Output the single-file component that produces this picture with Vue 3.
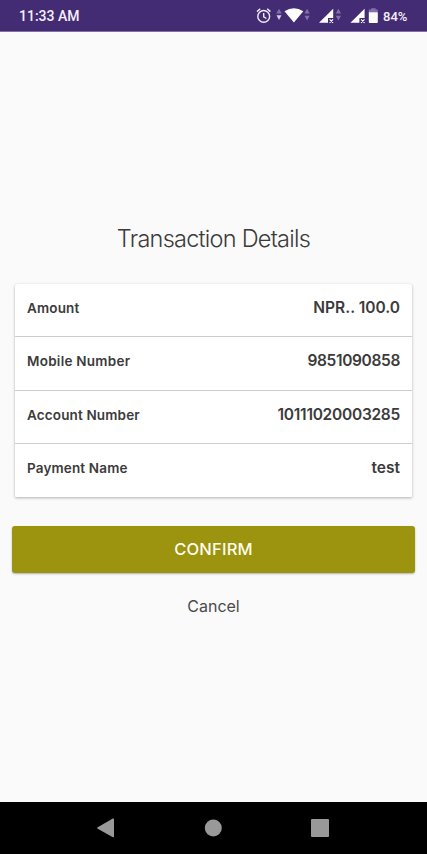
<script setup>
const rows = [
  { id: 'amount', label: 'Amount', value: 'NPR.. 100.0' },
  { id: 'mobile', label: 'Mobile Number', value: '9851090858' },
  { id: 'account', label: 'Account Number', value: '10111020003285' },
  { id: 'payment', label: 'Payment Name', value: 'test' },
]
</script>

<template>
  <div class="screen">
    <header class="status">
      <span class="time">11:33 AM</span>
      <svg class="icons" width="124" height="31" viewBox="256 0 124 31">
        <g fill="none" stroke="#f1ecf8" stroke-width="1.4">
          <circle cx="263.7" cy="16.4" r="5.9" />
          <path d="M263.7 13v3.8l2.7 1.7M257 11.6l3.2-2.8M270.4 11.6l-3.2-2.8" />
        </g>
        <g fill="#8272ab">
          <path d="M276.3 13.4l2.7-4.6 2.7 4.6zM304.5 13.4l2.6-4.6 2.6 4.6zM304.5 15.8h5.2l-2.6 4.6zM335.8 13.4l2.6-4.6 2.6 4.6zM335.8 15.8h5.2l-2.6 4.6z" />
          <path d="M371.2 8.2h4.4v1.3h2.2v3h-9v-3h2.4z" />
        </g>
        <g fill="#fff">
          <path d="M276.5 15.3h5l-2.5 4.8z" fill="#d9d1e6" />
          <path d="M284.5 11.3Q294 5 303.3 11.3L293.9 22.6z" />
          <path d="M319 22.8L333.2 8.8V17.9H328V22.8z" />
          <path d="M350.4 22.8L364.6 8.8V17.9H359.4V22.8z" />
          <path d="M368.8 12.2h9v9.7q0 1-1 1h-7q-1 0-1-1z" />
        </g>
        <path d="M329.6 19.4l3.5 3.5m0-3.5l-3.5 3.5M361 19.4l3.5 3.5m0-3.5l-3.5 3.5" stroke="#fff" stroke-width="1.1" />
      </svg>
      <span class="percent">84%</span>
    </header>

    <main class="content">
      <h1 class="title">Transaction Details</h1>
      <section class="card">
        <div v-for="row in rows" :key="row.id" class="row">
          <span class="label" :class="row.id">{{ row.label }}</span>
          <span class="value" :class="row.id">{{ row.value }}</span>
        </div>
      </section>
      <button class="confirm">CONFIRM</button>
      <button class="cancel">Cancel</button>
    </main>

    <nav class="navbar">
      <svg width="18" height="20" viewBox="0 0 18 20"><path d="M.7 9.3L15.9.6q1.1-.5 1.1.6v17.5q0 1-1.1.5L.7 10.7q-1-.7 0-1.4z" fill="#999" /></svg>
      <svg width="18" height="18" viewBox="0 0 18 18"><circle cx="9.3" cy="9" r="8.5" fill="#999" /></svg>
      <svg width="18" height="18" viewBox="0 0 18 18"><rect width="18" height="18" rx="1" fill="#999" /></svg>
    </nav>
  </div>
</template>

<style>
body {
  background: #fafafa;
}
</style>

<style scoped>
.screen {
  display: flex;
  flex-direction: column;
  width: 427px;
  height: 854px;
  overflow: hidden;
  background: #fafafa;
  color: #3b3b3b;
  font-family: Inter, sans-serif;
}
.status {
  display: flex;
  align-items: center;
  box-sizing: border-box;
  height: 32px;
  flex: none;
  padding: 0 19px;
  background: #442c74;
  border-bottom: 1px solid #8170a3;
  color: #f4effa;
  font-family: Roboto, sans-serif;
  font-weight: 500;
}
.time {
  font-size: 14px;
  line-height: 16px;
  padding-top: 1px;
}
.icons {
  margin-left: auto;
}
.percent {
  width: 28px;
  padding: 1px 0 0 3px;
  box-sizing: border-box;
  font-size: 13px;
  line-height: 15px;
}
.content {
  display: flex;
  flex-direction: column;
  flex: 1;
  padding: 191px 12px 0;
}
.title {
  margin: 0 0 29px;
  text-align: center;
  font-size: 23.5px;
  line-height: 32px;
  font-weight: 300;
  letter-spacing: -0.75px;
}
.card {
  margin: 0 3px;
  background: #fff;
  border-radius: 3px 3px 1px 1px;
  box-shadow: 0 1px 3px rgba(0, 0, 0, 0.3);
}
.row {
  display: flex;
  justify-content: space-between;
  box-sizing: border-box;
  height: 53.4px;
  padding: 14px 12px 0;
  border-bottom: 1.4px solid #cdcdcd;
}
.row:last-child {
  height: 52.8px;
  border-bottom: 0;
}
.label {
  font-size: 13.5px;
  line-height: 20px;
  font-weight: 600;
  letter-spacing: 0.15px;
}
.label.mobile {
  letter-spacing: 0.25px;
}
.value {
  font-size: 15.5px;
  line-height: 20px;
  font-weight: 600;
}
.value.mobile {
  letter-spacing: -0.35px;
}
.value.account {
  letter-spacing: -0.27px;
}
button {
  border: 0;
  padding: 0;
  font-family: inherit;
  font-size: 16px;
}
.confirm {
  height: 47px;
  margin-top: 29px;
  background: #9c930e;
  color: #fffef0;
  border-radius: 3px;
  box-shadow: 0 1px 2px rgba(0, 0, 0, 0.3);
  font-size: 16.5px;
  font-weight: 500;
  letter-spacing: 0.2px;
}
.cancel {
  height: 36px;
  margin-top: 15px;
  background: transparent;
  color: #4a4a4a;
}
.navbar {
  display: flex;
  align-items: center;
  justify-content: space-between;
  box-sizing: border-box;
  height: 52px;
  flex: none;
  padding: 0 98px 0 97px;
  background: #000;
}
</style>
